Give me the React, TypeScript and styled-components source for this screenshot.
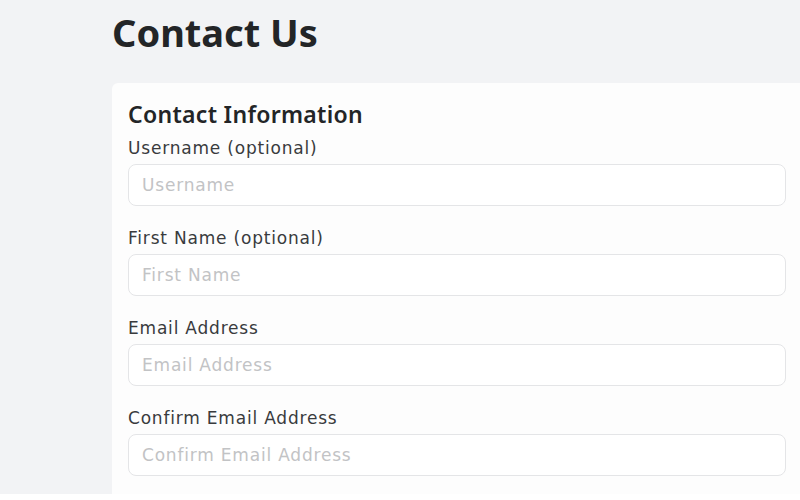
import React from "react";
import styled, { createGlobalStyle } from "styled-components";

const fields = [
  { label: "Username (optional)", placeholder: "Username" },
  { label: "First Name (optional)", placeholder: "First Name" },
  { label: "Email Address", placeholder: "Email Address" },
  { label: "Confirm Email Address", placeholder: "Confirm Email Address" },
];

export default function App() {
  return (
    <>
      <GlobalStyle />
      <Page>
        <Main>
          <Title>Contact Us</Title>
          <Card>
            <CardTitle>Contact Information</CardTitle>
            {fields.map((f) => (
              <Field key={f.label}>
                <Label>{f.label}</Label>
                <Input placeholder={f.placeholder} />
              </Field>
            ))}
          </Card>
        </Main>
        <Footer />
      </Page>
    </>
  );
}

const GlobalStyle = createGlobalStyle`
  html, body {
    margin: 0;
    padding: 0;
    background: #ffffff;
    font-family: "DejaVu Sans", "Liberation Sans", sans-serif;
  }
`;

const Page = styled.div`
  width: 800px;
  height: 500px;
  overflow: hidden;
  display: flex;
  flex-direction: column;
`;

const Main = styled.div`
  flex: 1;
  min-height: 0;
  background: #f2f3f5;
  padding-left: 112px;
  display: flex;
  flex-direction: column;
  overflow: hidden;
`;

const Title = styled.h1`
  margin: 0;
  height: 83px;
  box-sizing: border-box;
  padding-top: 8px;
  font-family: "Noto Sans", sans-serif;
  font-size: 38px;
  font-weight: 700;
  color: #232527;
  line-height: 48px;
`;

const Card = styled.div`
  flex: 1;
  background: #fdfdfd;
  border-top-left-radius: 6px;
  padding: 14px 14px 0 16px;
  overflow: hidden;
`;

const CardTitle = styled.h2`
  margin: 0 0 4px;
  font-family: "Noto Sans", sans-serif;
  font-size: 23px;
  font-weight: 600;
  letter-spacing: 0.3px;
  color: #232527;
  line-height: 34px;
`;

const Field = styled.div`
  display: flex;
  flex-direction: column;
  margin-bottom: 19px;
`;

const Label = styled.label`
  font-size: 17px;
  letter-spacing: 0.8px;
  color: #393b3d;
  line-height: 26px;
  margin-bottom: 3px;
`;

const Input = styled.input`
  box-sizing: border-box;
  width: 658px;
  height: 42px;
  border: 1px solid #e4e5e7;
  border-radius: 8px;
  background: #ffffff;
  padding: 0 13px;
  font-family: "DejaVu Sans", sans-serif;
  font-size: 17px;
  letter-spacing: 0.8px;
  outline: none;

  &::placeholder {
    color: #c2c3c5;
  }
`;

const Footer = styled.div`
  height: 6px;
  background: #ffffff;
`;
